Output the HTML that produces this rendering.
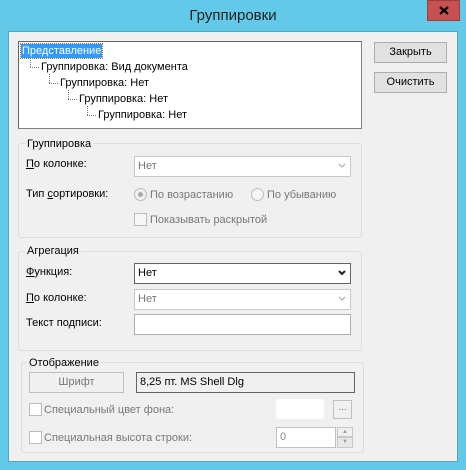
<!DOCTYPE html><html><head><meta charset="utf-8"><style>
*{box-sizing:border-box;margin:0;padding:0}
body{width:466px;height:470px;background:#62c9e9;font-family:"Liberation Sans",sans-serif;font-size:11px;color:#000;position:relative;overflow:hidden}
.a{position:absolute}
.client{left:8px;top:31px;width:450px;height:431px;background:#f0f0f0;border:1px solid #53a5c0}
.btn{position:absolute;background:#e1e1e1;border:1px solid #adadad;text-align:center;line-height:18px}
.grp{position:absolute;border:1px solid #dcdcdc;border-radius:3px}
.lg{position:absolute;background:#f0f0f0;padding:0 2px;line-height:14px}
.cb{position:absolute;background:#fff;border:1px solid #c8c8c8;line-height:18px;padding-left:3px;color:#777}
.cb svg{position:absolute;right:4px;top:6px}
.dis{color:#777}
.chk{position:absolute;width:13px;height:13px;border:1px solid #bcbcbc;background:#f6f6f6}
u{text-decoration:underline}
</style></head><body>
<div class="a" style="left:0;width:466px;text-align:center;top:7px;font-size:15px;color:#1f1f1f">Группировки</div>
<div class="a" style="left:427px;top:0;width:33px;height:21px;background:#c75050;border:1px solid #9c3d3d"><svg class="a" style="left:11px;top:5px" width="10" height="9"><path d="M1 1L9 8M9 1L1 8" stroke="#000" stroke-width="2.2"/></svg></div>
<div class="a client"></div>
<div class="a" style="left:18px;top:41px;width:344px;height:88px;background:#fff;border:1px solid #828282;border-top-color:#646464;border-left-color:#646464"></div>
<div class="a" style="left:21px;top:44px;background:#3399ff;color:#fff;padding:0 1px;line-height:14px;outline:1px dotted #a07030">Представление</div>
<div class="a" style="left:30px;top:58px;width:1px;height:9px;border-left:1px dotted #777"></div><div class="a" style="left:30px;top:67px;width:9px;border-top:1px dotted #777"></div>
<div class="a" style="left:41px;top:61px">Группировка: Вид документа</div>
<div class="a" style="left:49px;top:74px;height:9px;border-left:1px dotted #777"></div><div class="a" style="left:49px;top:83px;width:9px;border-top:1px dotted #777"></div>
<div class="a" style="left:60px;top:77px">Группировка: Нет</div>
<div class="a" style="left:68px;top:90px;height:9px;border-left:1px dotted #777"></div><div class="a" style="left:68px;top:99px;width:9px;border-top:1px dotted #777"></div>
<div class="a" style="left:79px;top:93px">Группировка: Нет</div>
<div class="a" style="left:87px;top:106px;height:9px;border-left:1px dotted #777"></div><div class="a" style="left:87px;top:115px;width:9px;border-top:1px dotted #777"></div>
<div class="a" style="left:98px;top:109px">Группировка: Нет</div>
<div class="btn" style="left:374px;top:42px;width:73px;height:21px">Закрыть</div>
<div class="btn" style="left:374px;top:72px;width:73px;height:21px">Очистить</div>

<div class="grp" style="left:18px;top:143px;width:344px;height:95px"></div>
<div class="lg" style="left:25px;top:137px">Группировка</div>
<div class="a" style="left:26px;top:158px"><u>П</u>о колонке:</div>
<div class="cb" style="left:134px;top:156px;width:217px;height:21px">Нет<svg width="8" height="6"><path d="M1 1L4 4L7 1" stroke="#bbb" stroke-width="1.5" fill="none"/></svg></div>
<div class="a" style="left:26px;top:188px">Тип <u>с</u>ортировки:</div>
<div class="a" style="left:134px;top:188px;width:13px;height:13px;border-radius:50%;border:1px solid #bcbcbc;background:#f0f0f0"><div class="a" style="left:3px;top:3px;width:5px;height:5px;border-radius:50%;background:#aaa"></div></div>
<div class="a dis" style="left:150px;top:189px">По возрастанию</div>
<div class="a" style="left:251px;top:188px;width:13px;height:13px;border-radius:50%;border:1px solid #bcbcbc;background:#f6f6f6"></div>
<div class="a dis" style="left:267px;top:189px">По убыванию</div>
<div class="chk" style="left:134px;top:213px"></div>
<div class="a dis" style="left:150px;top:214px">Показывать раскрытой</div>

<div class="grp" style="left:18px;top:251px;width:344px;height:100px"></div>
<div class="lg" style="left:25px;top:244px">Агрегация</div>
<div class="a" style="left:26px;top:266px"><u>Ф</u>ункция:</div>
<div class="cb" style="left:134px;top:263px;width:217px;height:21px;border-color:#646464;color:#000">Нет<svg width="8" height="6"><path d="M1 1L4 4L7 1" stroke="#222" stroke-width="2" fill="none"/></svg></div>
<div class="a" style="left:26px;top:292px"><u>П</u>о колонке:</div>
<div class="cb" style="left:134px;top:289px;width:217px;height:21px">Нет<svg width="8" height="6"><path d="M1 1L4 4L7 1" stroke="#bbb" stroke-width="1.5" fill="none"/></svg></div>
<div class="a" style="left:26px;top:317px">Текст подписи:</div>
<div class="cb" style="left:134px;top:314px;width:217px;height:21px;border-color:#adadad"></div>

<div class="grp" style="left:21px;top:362px;width:343px;height:91px"></div>
<div class="lg" style="left:27px;top:356px">Отображение</div>
<div class="btn dis" style="left:29px;top:372px;width:95px;height:21px;border-color:#bfbfbf;background:#f0f0f0">Шрифт</div>
<div class="a" style="left:136px;top:372px;width:219px;height:21px;border:1px solid #646464;background:#f0f0f0;line-height:19px;padding-left:3px">8,25 пт. MS Shell Dlg</div>
<div class="chk" style="left:29px;top:403px;background:#fff"></div>
<div class="a dis" style="left:44px;top:404px">Специальный цвет фона:</div>
<div class="a" style="left:276px;top:399px;width:48px;height:20px;background:#fff;border-radius:3px"></div>
<div class="a dis" style="left:333px;top:400px;width:19px;height:19px;border:1px solid #bfbfbf;text-align:center;line-height:14px;font-size:10px">...</div>
<div class="chk" style="left:29px;top:431px;background:#fff"></div>
<div class="a dis" style="left:44px;top:432px">Специальная высота строки:</div>
<div class="a" style="left:276px;top:427px;width:60px;height:21px;background:#fff;border:1px solid #bfbfbf;line-height:19px;padding-left:3px;color:#888">0</div>
<div class="a" style="left:337px;top:427px;width:16px;height:10px;border:1px solid #c8c8c8;background:#f0f0f0;font-size:6px;text-align:center;color:#999;line-height:8px">▲</div>
<div class="a" style="left:337px;top:437px;width:16px;height:11px;border:1px solid #c8c8c8;background:#e8e8e8;font-size:6px;text-align:center;color:#999;line-height:9px">▼</div>
</body></html>
